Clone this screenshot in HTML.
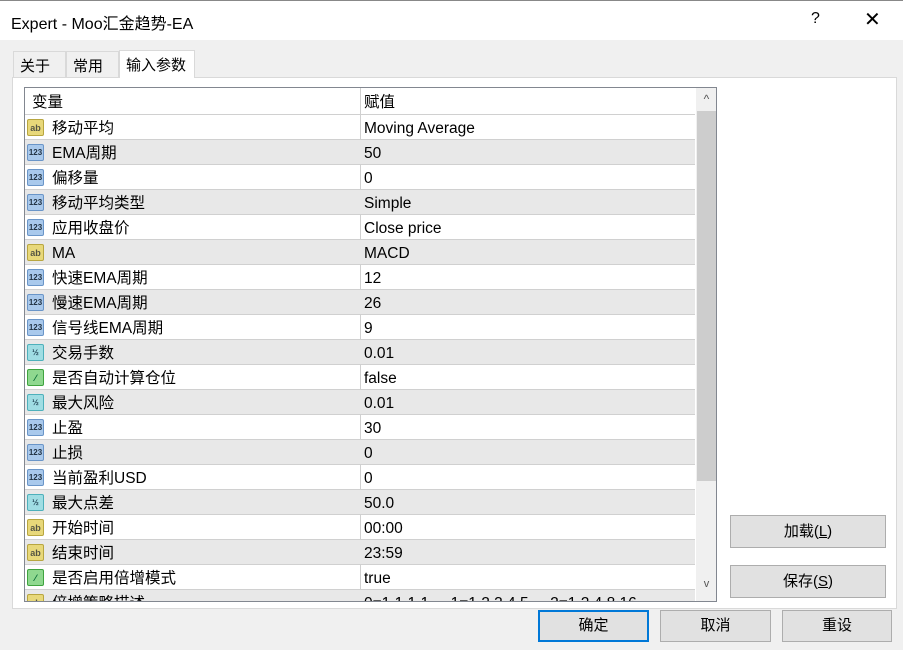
<!DOCTYPE html><html><head><meta charset="utf-8"><style>
*{margin:0;padding:0;box-sizing:border-box}
body{width:903px;height:650px;background:#f0f0f0;font-family:"Liberation Sans","Noto Sans CJK SC",sans-serif;font-size:14px;color:#000;position:relative;overflow:hidden}
.a{position:absolute}
.title{left:0;top:0;width:903px;height:40px;background:#fff;border-top:1px solid #888}
.tab{height:26px;border:1px solid #d9d9d9;border-bottom:none;padding:3px 0 0 6px;font-size:15px}
.panel{left:12px;top:77px;width:885px;height:532px;background:#fff;border:1px solid #d9d9d9}
.tbl{left:24px;top:87px;width:693px;height:515px;border:1px solid #828790;background:#fff;overflow:hidden;font-size:15.5px}
.row{position:absolute;left:0;width:670px;height:25px;border-bottom:1px solid #d0d0d0}
.row.g{background:#e8e8e8}
.row span{position:absolute;top:4px;line-height:20px;white-space:nowrap}
.n{left:27px}.row span.v{left:339px;top:4px}
.ic{position:absolute;left:2px;top:4px;width:17px;height:17px;border-radius:2px;font-size:9px;font-weight:bold;text-align:center;line-height:16px;font-style:normal}
.ab{background:#e8d87a;border:1px solid #b8a640;color:#554}
.i3{background:#a9c9ec;border:1px solid #6a95c8;color:#234;font-size:8px}
.hf{background:#9fdde3;border:1px solid #4db0bb;color:#245;font-size:8px}
.bo{background:#8fd88f;border:1px solid #3fa33f;color:#063}
.col{position:absolute;left:335px;top:0;width:1px;height:515px;background:#d0d0d0}
.btn{position:absolute;background:#e1e1e1;border:1px solid #adadad;text-align:center;font-size:15px}
</style></head><body>
<div class="a title"><div class="a" style="left:11px;top:9px;font-size:16px">Expert - Moo汇金趋势-EA</div>
<div class="a" style="left:811px;top:9px;font-size:16px">?</div>
<div class="a" style="left:864px;top:6px;font-size:20px;font-weight:200">✕</div></div>
<div class="a panel"></div>
<div class="a tab" style="left:13px;top:51px;width:53px;background:#f0f0f0">关于</div>
<div class="a tab" style="left:66px;top:51px;width:53px;background:#f0f0f0">常用</div>
<div class="a tab" style="left:119px;top:50px;width:76px;height:28px;background:#fff">输入参数</div>
<div class="a tbl">
<div class="col"></div>
<div class="row" style="top:0;height:27px"><span style="left:7px;top:5px">变量</span><span class="v" style="top:5px">赋值</span></div>
<div class="row" style="top:27px"><i class="ic ab">ab</i><span class="n">移动平均</span><span class="v">Moving Average</span></div>
<div class="row g" style="top:52px"><i class="ic i3">123</i><span class="n">EMA周期</span><span class="v">50</span></div>
<div class="row" style="top:77px"><i class="ic i3">123</i><span class="n">偏移量</span><span class="v">0</span></div>
<div class="row g" style="top:102px"><i class="ic i3">123</i><span class="n">移动平均类型</span><span class="v">Simple</span></div>
<div class="row" style="top:127px"><i class="ic i3">123</i><span class="n">应用收盘价</span><span class="v">Close price</span></div>
<div class="row g" style="top:152px"><i class="ic ab">ab</i><span class="n">MA</span><span class="v">MACD</span></div>
<div class="row" style="top:177px"><i class="ic i3">123</i><span class="n">快速EMA周期</span><span class="v">12</span></div>
<div class="row g" style="top:202px"><i class="ic i3">123</i><span class="n">慢速EMA周期</span><span class="v">26</span></div>
<div class="row" style="top:227px"><i class="ic i3">123</i><span class="n">信号线EMA周期</span><span class="v">9</span></div>
<div class="row g" style="top:252px"><i class="ic hf">½</i><span class="n">交易手数</span><span class="v">0.01</span></div>
<div class="row" style="top:277px"><i class="ic bo">⁄</i><span class="n">是否自动计算仓位</span><span class="v">false</span></div>
<div class="row g" style="top:302px"><i class="ic hf">½</i><span class="n">最大风险</span><span class="v">0.01</span></div>
<div class="row" style="top:327px"><i class="ic i3">123</i><span class="n">止盈</span><span class="v">30</span></div>
<div class="row g" style="top:352px"><i class="ic i3">123</i><span class="n">止损</span><span class="v">0</span></div>
<div class="row" style="top:377px"><i class="ic i3">123</i><span class="n">当前盈利USD</span><span class="v">0</span></div>
<div class="row g" style="top:402px"><i class="ic hf">½</i><span class="n">最大点差</span><span class="v">50.0</span></div>
<div class="row" style="top:427px"><i class="ic ab">ab</i><span class="n">开始时间</span><span class="v">00:00</span></div>
<div class="row g" style="top:452px"><i class="ic ab">ab</i><span class="n">结束时间</span><span class="v">23:59</span></div>
<div class="row" style="top:477px"><i class="ic bo">⁄</i><span class="n">是否启用倍增模式</span><span class="v">true</span></div>
<div class="row g" style="top:502px"><i class="ic ab">ab</i><span class="n">倍增策略描述</span><span class="v">0=1,1,1,1 ... 1=1,2,3,4,5 ... 2=1,2,4,8,16</span></div>
<div class="a" style="left:671px;top:0;width:21px;height:515px;background:#f0f0f0"></div>
<div class="a" style="left:671px;top:0;width:21px;height:20px;text-align:center;color:#555;font-size:12px;line-height:22px">^</div>
<div class="a" style="left:672px;top:23px;width:19px;height:370px;background:#cdcdcd"></div>
<div class="a" style="left:671px;top:490px;width:21px;height:20px;text-align:center;color:#555;font-size:11px">v</div>
</div>
<div class="btn" style="left:730px;top:515px;width:156px;height:33px;line-height:31px">加载(<u>L</u>)</div>
<div class="btn" style="left:730px;top:565px;width:156px;height:33px;line-height:31px">保存(<u>S</u>)</div>
<div class="btn" style="left:538px;top:610px;width:111px;height:32px;line-height:28px;border:2px solid #0078d7">确定</div>
<div class="btn" style="left:660px;top:610px;width:111px;height:32px;line-height:30px">取消</div>
<div class="btn" style="left:782px;top:610px;width:110px;height:32px;line-height:30px">重设</div>
</body></html>
